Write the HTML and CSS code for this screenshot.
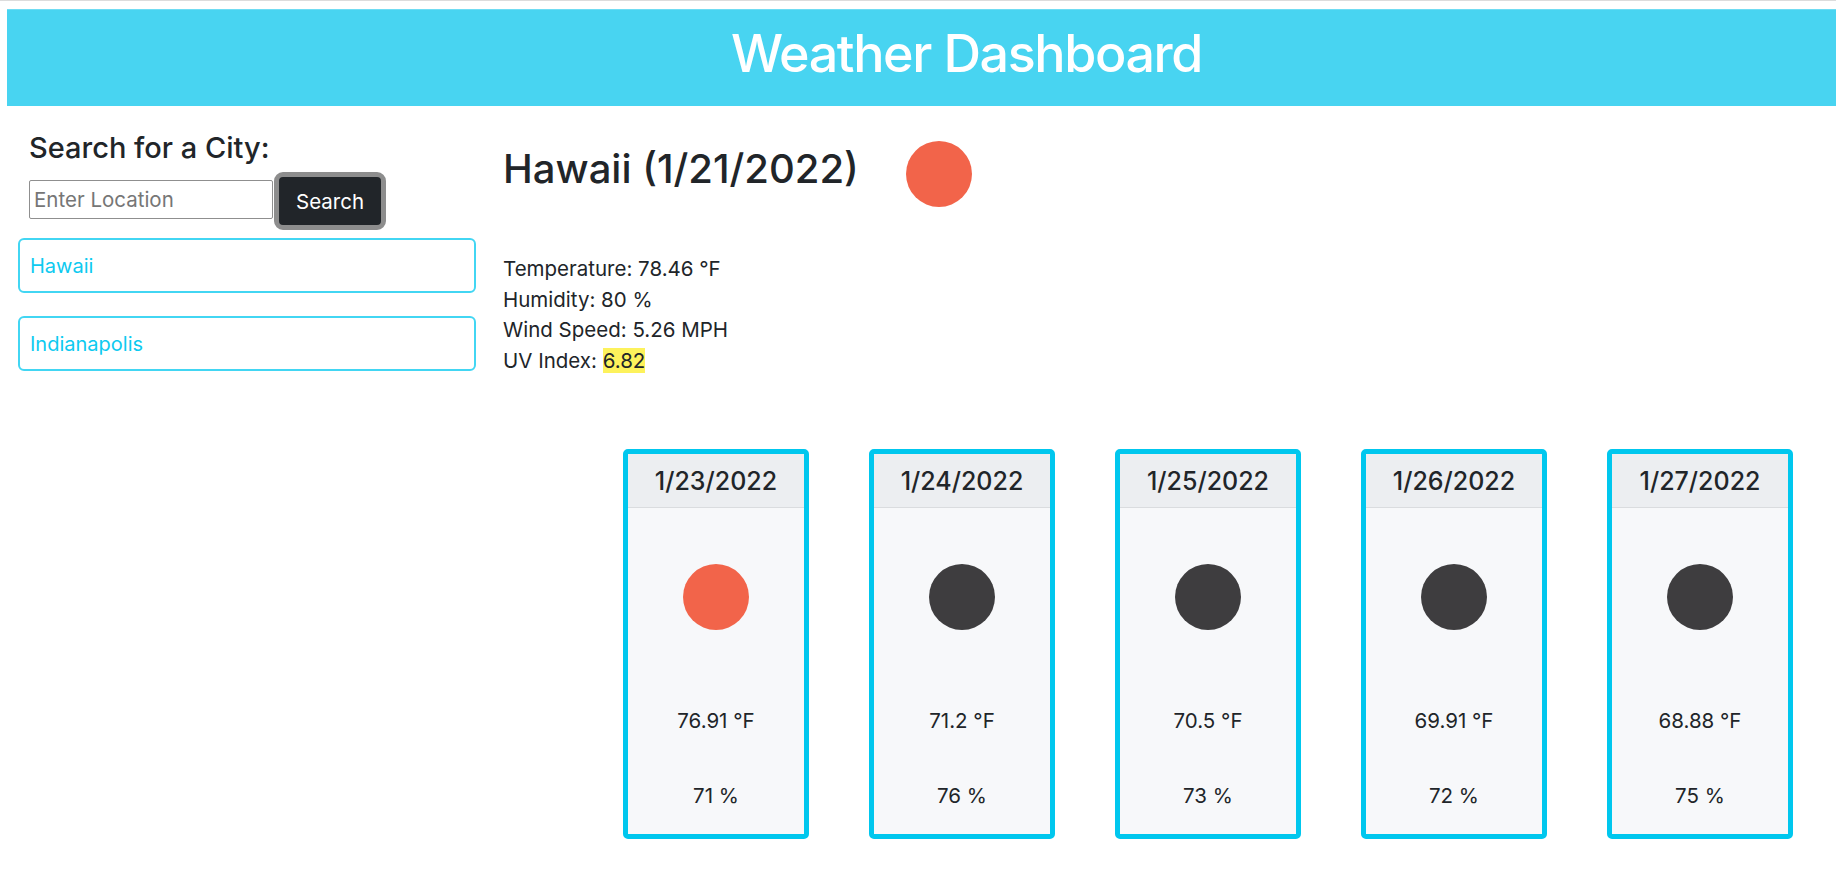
FILE: index.html
```html
<!DOCTYPE html>
<html lang="en">
<head>
<meta charset="utf-8">
<title>Weather Dashboard</title>
<link rel="stylesheet" href="styles.css">
</head>
<body>
<div class="topline"></div>
<header class="hero">
  <h1 class="hero-title">Weather Dashboard</h1>
</header>
<main class="layout">
  <aside class="sidebar">
    <h4 class="search-title">Search for a City:</h4>
    <div class="search-row">
      <input class="search-input" type="text" placeholder="Enter Location">
      <button class="search-btn" type="button">Search</button>
    </div>
    <ul class="history">
      <li><button class="history-btn" type="button">Hawaii</button></li>
      <li><button class="history-btn" type="button">Indianapolis</button></li>
    </ul>
  </aside>
  <section class="content">
    <div class="current-head">
      <h2 class="current-title">Hawaii (1/21/2022)</h2>
      <span class="dot dot-sun"></span>
    </div>
    <div class="stats">
      <p>Temperature: 78.46 °F</p>
      <p>Humidity: 80 %</p>
      <p>Wind Speed: 5.26 MPH</p>
      <p>UV Index: <span class="uv">6.82</span></p>
    </div>
    <div class="forecast">
      <div class="card">
        <div class="card-head">1/23/2022</div>
        <div class="card-body">
          <span class="dot dot-sun"></span>
          <p class="card-temp">76.91 °F</p>
          <p class="card-hum">71 %</p>
        </div>
      </div>
      <div class="card">
        <div class="card-head">1/24/2022</div>
        <div class="card-body">
          <span class="dot dot-night"></span>
          <p class="card-temp">71.2 °F</p>
          <p class="card-hum">76 %</p>
        </div>
      </div>
      <div class="card">
        <div class="card-head">1/25/2022</div>
        <div class="card-body">
          <span class="dot dot-night"></span>
          <p class="card-temp">70.5 °F</p>
          <p class="card-hum">73 %</p>
        </div>
      </div>
      <div class="card">
        <div class="card-head">1/26/2022</div>
        <div class="card-body">
          <span class="dot dot-night"></span>
          <p class="card-temp">69.91 °F</p>
          <p class="card-hum">72 %</p>
        </div>
      </div>
      <div class="card">
        <div class="card-head">1/27/2022</div>
        <div class="card-body">
          <span class="dot dot-night"></span>
          <p class="card-temp">68.88 °F</p>
          <p class="card-hum">75 %</p>
        </div>
      </div>
    </div>
  </section>
</main>
</body>
</html>
```
FILE: styles.css
```css
* { box-sizing: border-box; }
html, body { margin: 0; padding: 0; background: #fff; }
body {
  font-family: Inter, "Liberation Sans", sans-serif;
  font-size: 20.5px;
  line-height: 1.5;
  color: #212529;
}
.topline { height: 1px; background: #dcdcdc; }
.hero {
  margin: 8px 0 0 7px;
  height: 97px;
  background: #48d4f1;
  border-top: 1px solid #6fdcf3;
  display: flex;
  justify-content: center;
  padding: 14px 0 0 90px;
}
.hero-title {
  margin: 0;
  font-size: 52px;
  font-weight: 500;
  line-height: 60px;
  color: #fff;
  letter-spacing: -1.4px;
}
.layout { display: flex; align-items: flex-start; }
.sidebar { width: 458px; margin-left: 18px; flex: none; padding-top: 22px; }
.search-title {
  margin: 0 0 0 11px;
  font-size: 29px;
  font-weight: 500;
  line-height: 40px;
}
.search-row { display: flex; align-items: flex-start; margin: 4px 0 0 11px; }
.search-input {
  margin-top: 8px;
  width: 244px; height: 39px;
  border: 1px solid #8f8f8f;
  border-radius: 2px;
  padding: 0 4px;
  font-family: inherit;
  font-size: 20.5px;
  color: #212529;
}
.search-input::placeholder { color: #767676; }
.search-btn {
  margin-left: 1px;
  width: 112px; height: 58px;
  background: #212529;
  color: #fff;
  border: 5px solid #8d8d8d;
  border-radius: 9px;
  font-family: inherit;
  font-size: 20.5px;
  padding: 0;
}
.history { list-style: none; margin: 8px 0 0; padding: 0; display: flex; flex-direction: column; gap: 23px; }
.history-btn {
  display: block; width: 100%; height: 55px;
  text-align: left;
  background: #fff;
  border: 2px solid #42d6f3;
  border-radius: 6px;
  color: #0dcaf0;
  font-family: inherit;
  font-size: 20px;
  padding: 0 0 0 10px;
}
.content { margin-left: 27px; flex: 1; padding-top: 30px; }
.current-head { display: flex; align-items: flex-start; }
.current-title { margin: 9px 0 0; font-size: 40px; font-weight: 500; line-height: 48px; }
.dot { display: block; width: 66px; height: 66px; border-radius: 50%; flex: none; }
.dot-sun { background: #f2644a; }
.dot-night { background: #3e3d3f; }
.current-head .dot { margin: 5px 0 0 47px; }
.stats { margin-top: 47px; line-height: 30.5px; }
.stats p { margin: 0; }
.uv { background: #fdf25c; }
.forecast { display: flex; gap: 60px; margin: 73px 0 0 120px; }
.card {
  width: 186px; height: 390px;
  border: 5px solid #00c7ee;
  border-radius: 5px;
  background: #f7f8fa;
  display: flex; flex-direction: column;
}
.card-head {
  height: 54px;
  background: #eceef1;
  border-bottom: 1px solid #dadcdf;
  text-align: center;
  font-size: 25px;
  font-weight: 500;
  line-height: 54px;
}
.card-body { display: flex; flex-direction: column; align-items: center; padding-top: 56px; }
.card-temp { margin: 76px 0 0; line-height: 30px; }
.card-hum { margin: 45px 0 0; line-height: 30px; }
```
